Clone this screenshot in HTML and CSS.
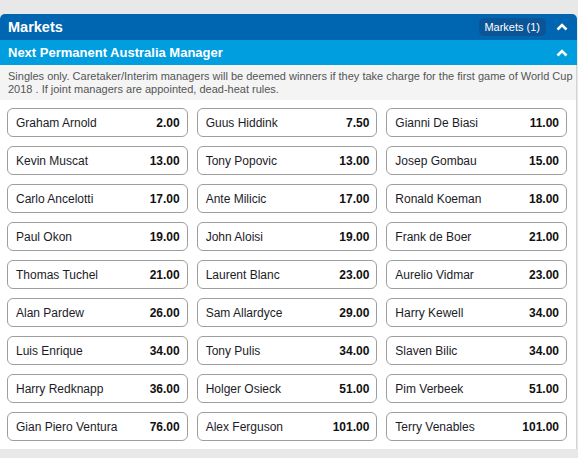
FILE: index.html
```html
<!DOCTYPE html>
<html>
<head>
<meta charset="utf-8">
<link rel="stylesheet" href="styles.css">
</head>
<body>
<div class="panel">
  <div class="hdr">
    <span class="hdr-title">Markets</span>
    <div class="hdr-right">
      <span class="pill">Markets (1)</span>
      <svg class="chev" width="12" height="8" viewBox="0 0 12 8"><path d="M1.5 6.5 L6 2 L10.5 6.5" fill="none" stroke="#fff" stroke-width="2.6"/></svg>
    </div>
  </div>
  <div class="sub">
    <span class="sub-title">Next Permanent Australia Manager</span>
    <svg class="chev" width="12" height="8" viewBox="0 0 12 8"><path d="M1.5 6.5 L6 2 L10.5 6.5" fill="none" stroke="#fff" stroke-width="2.6"/></svg>
  </div>
  <div class="desc">Singles only. Caretaker/Interim managers will be deemed winners if they take charge for the first game of World Cup 2018 . If joint managers are appointed, dead-heat rules.</div>
  <div class="grid">
    <div class="sel"><span class="name">Graham Arnold</span><span class="odds">2.00</span></div>
    <div class="sel"><span class="name">Guus Hiddink</span><span class="odds">7.50</span></div>
    <div class="sel"><span class="name">Gianni De Biasi</span><span class="odds">11.00</span></div>
    <div class="sel"><span class="name">Kevin Muscat</span><span class="odds">13.00</span></div>
    <div class="sel"><span class="name">Tony Popovic</span><span class="odds">13.00</span></div>
    <div class="sel"><span class="name">Josep Gombau</span><span class="odds">15.00</span></div>
    <div class="sel"><span class="name">Carlo Ancelotti</span><span class="odds">17.00</span></div>
    <div class="sel"><span class="name">Ante Milicic</span><span class="odds">17.00</span></div>
    <div class="sel"><span class="name">Ronald Koeman</span><span class="odds">18.00</span></div>
    <div class="sel"><span class="name">Paul Okon</span><span class="odds">19.00</span></div>
    <div class="sel"><span class="name">John Aloisi</span><span class="odds">19.00</span></div>
    <div class="sel"><span class="name">Frank de Boer</span><span class="odds">21.00</span></div>
    <div class="sel"><span class="name">Thomas Tuchel</span><span class="odds">21.00</span></div>
    <div class="sel"><span class="name">Laurent Blanc</span><span class="odds">23.00</span></div>
    <div class="sel"><span class="name">Aurelio Vidmar</span><span class="odds">23.00</span></div>
    <div class="sel"><span class="name">Alan Pardew</span><span class="odds">26.00</span></div>
    <div class="sel"><span class="name">Sam Allardyce</span><span class="odds">29.00</span></div>
    <div class="sel"><span class="name">Harry Kewell</span><span class="odds">34.00</span></div>
    <div class="sel"><span class="name">Luis Enrique</span><span class="odds">34.00</span></div>
    <div class="sel"><span class="name">Tony Pulis</span><span class="odds">34.00</span></div>
    <div class="sel"><span class="name">Slaven Bilic</span><span class="odds">34.00</span></div>
    <div class="sel"><span class="name">Harry Redknapp</span><span class="odds">36.00</span></div>
    <div class="sel"><span class="name">Holger Osieck</span><span class="odds">51.00</span></div>
    <div class="sel"><span class="name">Pim Verbeek</span><span class="odds">51.00</span></div>
    <div class="sel"><span class="name">Gian Piero Ventura</span><span class="odds">76.00</span></div>
    <div class="sel"><span class="name">Alex Ferguson</span><span class="odds">101.00</span></div>
    <div class="sel"><span class="name">Terry Venables</span><span class="odds">101.00</span></div>
  </div>
</div>
</body>
</html>
```
FILE: styles.css
```css
* { box-sizing: border-box; }
html, body { margin: 0; padding: 0; }
body {
  background: #e8e8e8;
  font-family: "Liberation Sans", Arial, sans-serif;
  padding-top: 14px;
}
.panel {
  width: 577px;
}
.hdr {
  height: 26px;
  background: #0166b2;
  border-radius: 5px 5px 0 0;
  display: flex;
  align-items: center;
  justify-content: space-between;
  padding: 0 9px 0 8px;
  color: #fff;
}
.hdr-title {
  font-weight: bold;
  font-size: 14.5px;
}
.hdr-right {
  display: flex;
  align-items: center;
  gap: 10px;
}
.pill {
  background: #0b5596;
  border-radius: 5px;
  font-size: 11px;
  height: 18px;
  line-height: 18px;
  padding: 0 6px 0 5px;
}
.chev { display: block; }
.sub {
  height: 25px;
  background: #009ddf;
  display: flex;
  align-items: center;
  justify-content: space-between;
  padding: 0 9px 0 8px;
  color: #fff;
}
.sub-title {
  font-weight: bold;
  font-size: 13px;
}
.desc {
  background: #f4f4f4;
  border-right: 1px solid #d4d4d4;
  font-size: 11px;
  line-height: 13px;
  color: #555;
  padding: 5px 1px 9px 8px;
  height: 35px;
}
.grid {
  background: #fff;
  border-right: 1px solid #d4d4d4;
  display: grid;
  grid-template-columns: repeat(3, 1fr);
  column-gap: 9px;
  row-gap: 9px;
  padding: 8px 9px 8px 7px;
}
.sel {
  height: 29px;
  border: 1px solid #9e9e9e;
  border-radius: 6px;
  display: flex;
  align-items: center;
  justify-content: space-between;
  padding: 0 7px 0 8px;
  font-size: 12px;
  color: #1c1c28;
}
.odds {
  font-weight: bold;
  color: #111;
}
```
